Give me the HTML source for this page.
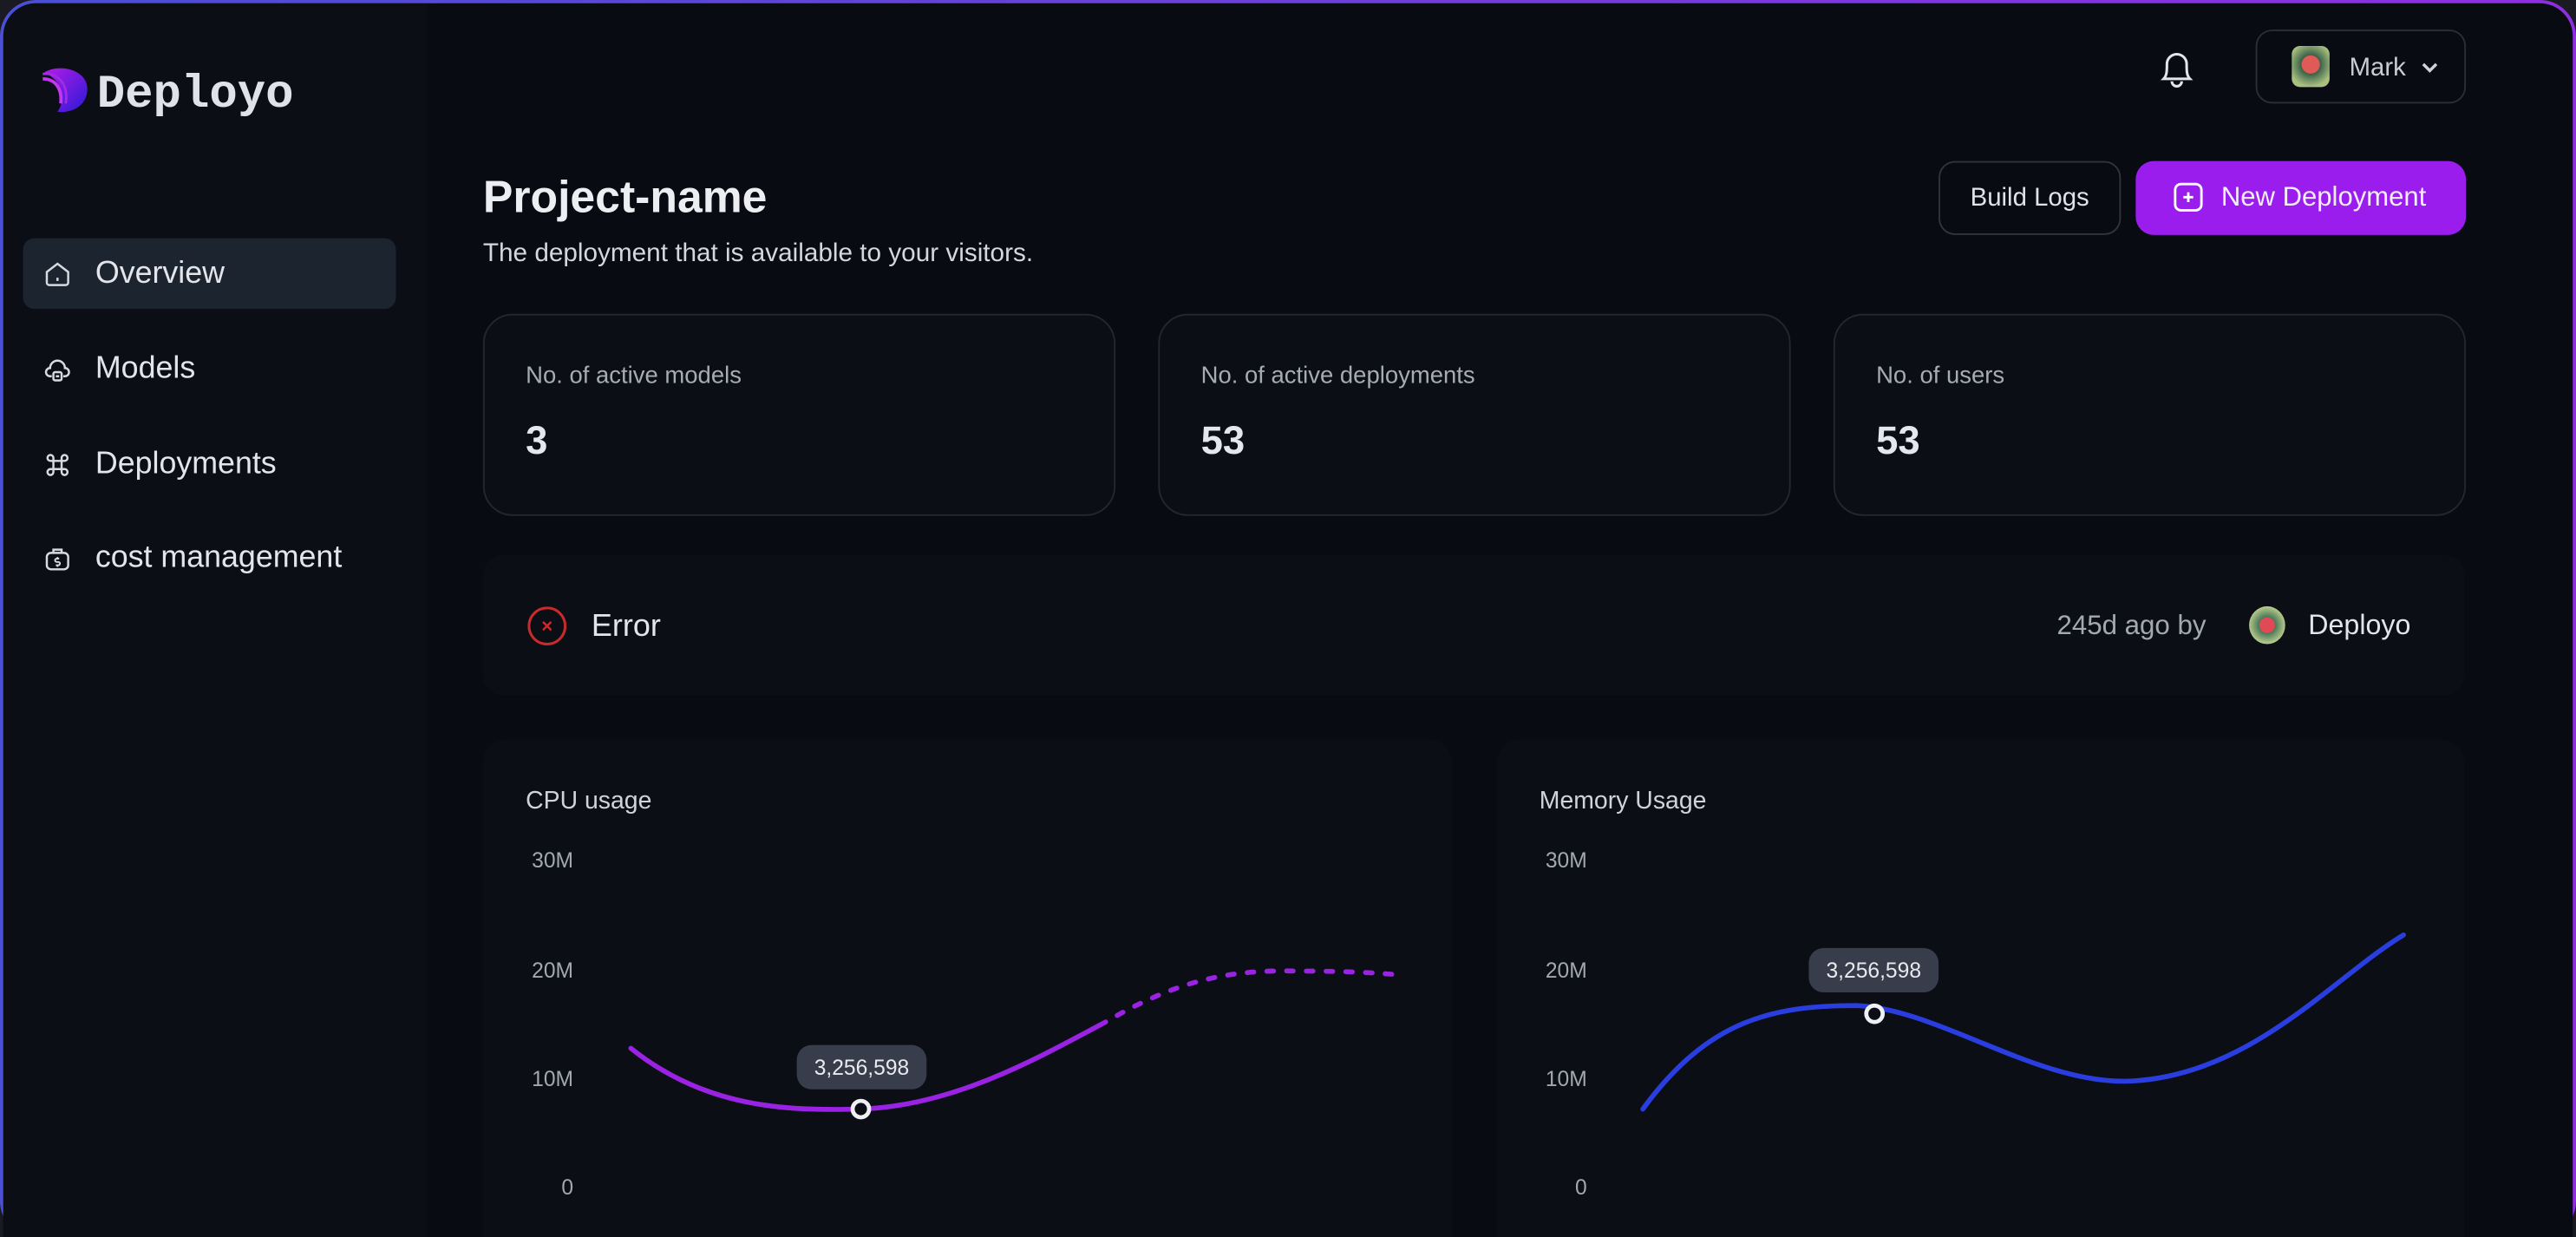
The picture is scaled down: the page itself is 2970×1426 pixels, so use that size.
<!DOCTYPE html>
<html><head><meta charset="utf-8">
<style>
html,body{margin:0;padding:0;background:#1a1a22;width:2970px;height:1425px;overflow:hidden}
#w{position:absolute;left:0;top:0;width:1568px;height:753px;transform:scale(1.89413);transform-origin:0 0;font-family:"Liberation Sans",sans-serif;color:#e3e5ea}
#frame{position:absolute;left:0;top:0;width:1568px;height:753px;border-radius:22px;background:linear-gradient(90deg,#4a4fd6,#8e2ee0);}
#inner{position:absolute;left:2px;top:2px;right:2px;bottom:0;border-radius:20px 20px 0 0;background:#080b12;overflow:hidden}
.abs{position:absolute}
#side{left:0;top:0;width:258px;height:760px;background:#0b0e15}
.nav{position:absolute;left:12px;width:227px;height:43px;border-radius:7px;display:flex;align-items:center;font-size:18.9px;color:#e3e5ea}
.nav svg{margin-left:13px;margin-right:15px}
.card{position:absolute;border:1px solid #23272f;border-radius:18px;background:#0b0e15}
.lbl{font-size:14.5px;color:#a7abb4}
.val{font-size:24px;font-weight:bold;color:#e5e7ec}
.ax{position:absolute;font-size:13px;color:#a3a7b0;text-align:right;width:36px}
.tip{position:absolute;background:#373d4a;border-radius:9px;font-size:13px;color:#e8eaee;width:79px;height:27px;line-height:27px;text-align:center}
</style></head><body>
<div id="w">
<div id="frame"><div id="inner">
<div class="abs" id="side"></div>
<svg class="abs" style="left:21px;top:37px" width="32" height="32" viewBox="0 0 32 32">
<defs><linearGradient id="lg" x1="0" y1="0" x2="1" y2="1"><stop offset="0" stop-color="#b41ce6"/><stop offset="1" stop-color="#2a1ad6"/></linearGradient></defs>
<path d="M4 5 C14 -1 32 4 30 17 C29 26 20 30 12 29 C17 22 16 11 4 5Z" fill="url(#lg)"/>
<path d="M3 9 C10 9 15 14 14 24" stroke="#c238f0" stroke-width="2" fill="none"/>
<path d="M3 6 C12 5 19 12 17 24" stroke="#a02ce6" stroke-width="1.5" fill="none"/>
</svg>
<div class="abs" style="left:57px;top:39px;font-family:'Liberation Mono',monospace;font-size:28.5px;font-weight:bold;color:#e0e2e8">Deployo</div>

<div class="nav" style="top:143px;background:#1c2430"><svg width="16" height="16" viewBox="0 0 16 16" fill="none" stroke="#d7dae0" stroke-width="1.3"><path d="M1.5 6.5 L8 1.5 L14.5 6.5 V13 a1.5 1.5 0 0 1-1.5 1.5 H3 a1.5 1.5 0 0 1-1.5-1.5Z"/><path d="M8 10v2"/></svg>Overview</div>
<div class="nav" style="top:201px"><svg width="16" height="16" viewBox="0 0 16 16" fill="none" stroke="#d7dae0" stroke-width="1.3"><path d="M4.5 12 H3.5 a2.5 2.5 0 0 1 0-5 a4.5 4.5 0 0 1 9 0 a2.5 2.5 0 0 1 0 5 H11.5"/><rect x="5.5" y="9.5" width="5" height="5" rx="1"/><path d="M7 12h2"/></svg>Models</div>
<div class="nav" style="top:259px"><svg width="16" height="16" viewBox="0 0 16 16" fill="none" stroke="#d7dae0" stroke-width="1.3"><path d="M5.5 5.5h5v5h-5z M5.5 5.5 V3.8 a1.8 1.8 0 1 0-1.7 1.7 H5.5 M10.5 5.5 V3.8 a1.8 1.8 0 1 1 1.7 1.7 H10.5 M5.5 10.5 v1.7 a1.8 1.8 0 1 1-1.7-1.7 H5.5 M10.5 10.5 v1.7 a1.8 1.8 0 1 0 1.7-1.7 H10.5"/></svg>Deployments</div>
<div class="nav" style="top:316px"><svg width="16" height="16" viewBox="0 0 16 16" fill="none" stroke="#d7dae0" stroke-width="1.3"><rect x="1.5" y="4.5" width="13" height="10" rx="2.5"/><path d="M5.5 4.5 V2.5 h5 v2"/><path d="M9 8 h-1.5 a1 1 0 0 0 0 2 h1 a1 1 0 0 1 0 2 H7 M8 7v1 M8 12v1" stroke-width="1"/></svg>cost management</div>

<svg class="abs" style="left:1311px;top:27px" width="24" height="26" viewBox="0 0 24 26" fill="none" stroke="#e3e5ea" stroke-width="1.6"><path d="M4 19 C6 17 6 14 6 10 a6 6 0 0 1 12 0 c0 4 0 7 2 9 Z"/><path d="M9 20.5 a3 3 0 0 0 6 0"/></svg>
<div class="abs" style="left:1371px;top:16px;width:128px;height:45px;border:1px solid #2a2e36;border-radius:10px;box-sizing:border-box"></div>
<div class="abs" style="left:1393px;top:26px;width:23px;height:25px;border-radius:5px;background:radial-gradient(circle at 50% 45%,#e05a58 0 30%,#3a6048 32%,#a8c080 75%)"></div>
<div class="abs" style="left:1428px;top:31px;font-size:15.5px;color:#c9ccd2">Mark</div>
<svg class="abs" style="left:1471px;top:34px" width="12" height="10" viewBox="0 0 12 10" fill="none" stroke="#d0d3d9" stroke-width="1.8"><path d="M2 3l4 4 4-4"/></svg>

<div class="abs" style="left:292px;top:102px;font-size:27.3px;font-weight:bold;color:#eceef2">Project-name</div>
<div class="abs" style="left:292px;top:144px;font-size:15.7px;color:#d4d7dd">The deployment that is available to your visitors.</div>

<div class="abs" style="left:1178px;top:96px;width:111px;height:45px;border:1px solid #30343c;border-radius:10px;box-sizing:border-box;font-size:15.5px;line-height:44px;text-align:center;color:#e0e2e6">Build Logs</div>
<div class="abs" style="left:1298px;top:96px;width:201px;height:45px;background:#9a1dee;border-radius:11px;font-size:16.4px;line-height:45px;color:#f4eefc">
<svg class="abs" style="left:22px;top:12px" width="20" height="20" viewBox="0 0 20 20" fill="none" stroke="#fff" stroke-width="1.5"><rect x="2" y="2" width="16" height="16" rx="3.5"/><path d="M10 7v6M7 10h6"/></svg>
<span style="position:absolute;left:52px">New Deployment</span></div>

<div class="card" style="left:292px;top:189px;width:383px;height:121px"><div class="abs lbl" style="left:25px;top:29px">No. of active models</div><div class="abs val" style="left:25px;top:63px">3</div></div>
<div class="card" style="left:703px;top:189px;width:383px;height:121px"><div class="abs lbl" style="left:25px;top:29px">No. of active deployments</div><div class="abs val" style="left:25px;top:63px">53</div></div>
<div class="card" style="left:1114px;top:189px;width:383px;height:121px"><div class="abs lbl" style="left:25px;top:29px">No. of users</div><div class="abs val" style="left:25px;top:63px">53</div></div>

<div class="abs" style="left:292px;top:336px;width:1206px;height:85px;background:#0b0e15;border-radius:12px"></div>
<svg class="abs" style="left:318px;top:366px" width="26" height="26" viewBox="0 0 26 26" fill="none" stroke="#c92a2a" stroke-width="1.6"><circle cx="13" cy="13" r="11"/><path d="M10.5 10.5l5 5M15.5 10.5l-5 5" stroke-width="1.3"/></svg>
<div class="abs" style="left:358px;top:369px;font-size:19px;color:#e3e5ea">Error</div>
<div class="abs" style="left:1250px;top:370px;font-size:16.5px;color:#a4a8b1">245d ago by</div>
<div class="abs" style="left:1367px;top:367px;width:22px;height:23px;border-radius:50%;background:radial-gradient(circle at 50% 50%,#e04a55 0 28%,#4b7a58 32%,#b7c98c 70%)"></div>
<div class="abs" style="left:1403px;top:369px;font-size:17px;color:#e3e5ea">Deployo</div>

<div class="abs" style="left:292px;top:448px;width:590px;height:320px;background:#0b0e15;border-radius:14px"></div>
<div class="abs" style="left:909px;top:448px;width:589px;height:320px;background:#0b0e15;border-radius:14px"></div>
<div class="abs" style="left:318px;top:477px;font-size:15px;color:#d0d3d9">CPU usage</div>
<div class="abs" style="left:935px;top:477px;font-size:15px;color:#d0d3d9">Memory Usage</div>
<div class="ax" style="left:311px;top:514px">30M</div><div class="ax" style="left:311px;top:581px">20M</div><div class="ax" style="left:311px;top:647px">10M</div><div class="ax" style="left:311px;top:713px">0</div>
<div class="ax" style="left:928px;top:514px">30M</div><div class="ax" style="left:928px;top:581px">20M</div><div class="ax" style="left:928px;top:647px">10M</div><div class="ax" style="left:928px;top:713px">0</div>
<svg class="abs" style="left:0;top:0" width="1568" height="753" viewBox="2 2 1568 753">
<path d="M384 638 C430 675 480 676 524 675 C580 673 630 645 673 622" stroke="#9a22e2" stroke-width="3" fill="none" stroke-linecap="round"/>
<path d="M680 618 C720 596 750 590 790 591 C820 591 835 592 848 593" stroke="#9a22e2" stroke-width="3" fill="none" stroke-dasharray="4 8" stroke-linecap="round"/>
<circle cx="524" cy="675" r="5" fill="#0b0e15" stroke="#f0f0f4" stroke-width="2.5"/>
<path d="M1000 675 C1040 620 1080 612 1130 612 C1180 614 1240 660 1296 658 C1370 655 1420 595 1463 569" stroke="#2a3ee0" stroke-width="3" fill="none" stroke-linecap="round"/>
<circle cx="1141" cy="617" r="5" fill="#0b0e15" stroke="#f0f0f4" stroke-width="2.5"/>
</svg>
<div class="tip" style="left:483px;top:634px">3,256,598</div>
<div class="tip" style="left:1099px;top:575px">3,256,598</div>
</div></div>
</div>
</body></html>
